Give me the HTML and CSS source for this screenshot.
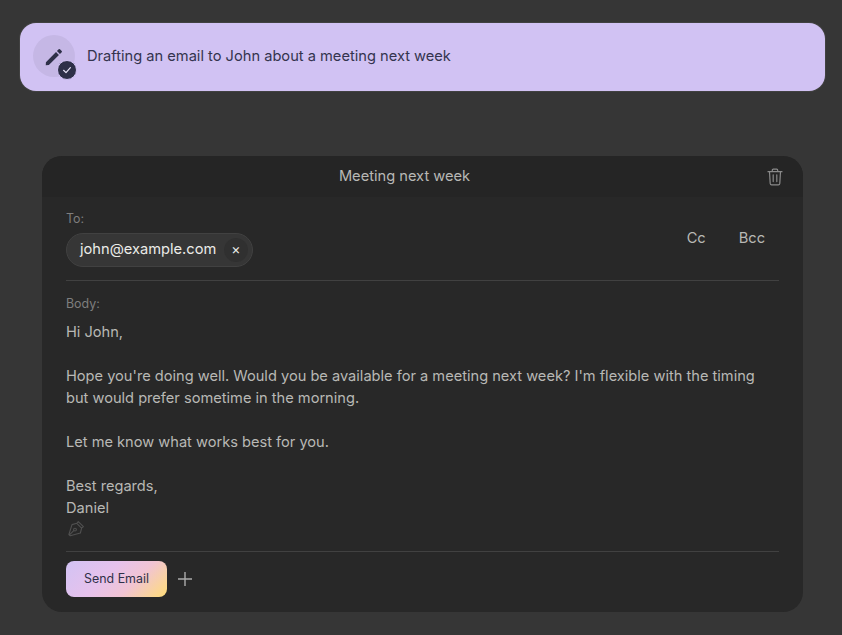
FILE: index.html
```html
<!DOCTYPE html>
<html lang="en">
<head>
<meta charset="utf-8">
<title>Email draft</title>
<link rel="stylesheet" href="styles.css">
</head>
<body>
<div class="banner">
  <div class="status-icon">
    <svg class="pencil" viewBox="0 0 24 24" width="22" height="22"><path d="M3.2 17.6 3 21l3.4-.2L17.4 9.8l-3.2-3.2L3.2 17.6zM20.4 6.8a1 1 0 0 0 0-1.4l-1.9-1.9a1 1 0 0 0-1.4 0l-1.9 1.9 3.3 3.3 1.9-1.9z"/></svg>
    <span class="check"><svg viewBox="0 0 12 12" width="12" height="12"><path d="M2.6 6.3 5 8.6l4.4-5" fill="none" stroke="#e8e4f6" stroke-width="1.2" stroke-linecap="round" stroke-linejoin="round"/></svg></span>
  </div>
  <span class="banner-text">Drafting an email to John about a meeting next week</span>
</div>
<section class="card">
  <header class="card-head">
    <span class="card-title">Meeting next week</span>
    <svg class="trash" viewBox="0 0 16 18" width="16" height="18"><path d="M1 3.7h14M5.3 3.5V2.2c0-.6.4-1 1-1h3.4c.6 0 1 .4 1 1v1.3M2.5 3.8l.7 11.6c.1.8.6 1.4 1.4 1.4h6.8c.8 0 1.3-.6 1.4-1.4l.7-11.6M6.2 6.8v6.8M9.8 6.8v6.8" fill="none" stroke="#8a8a8a" stroke-width="1.2" stroke-linecap="round" stroke-linejoin="round"/></svg>
  </header>
  <div class="card-body">
    <div class="to-row">
      <div class="to-field">
        <div class="label">To:</div>
        <div class="chip"><span>john@example.com</span><span class="chip-x">×</span></div>
      </div>
      <div class="cc-links"><span>Cc</span><span>Bcc</span></div>
    </div>
    <div class="body-field">
      <div class="label">Body:</div>
      <div class="message">
        <p>Hi John,</p>
        <p>Hope you're doing well. Would you be available for a meeting next week? I'm flexible with the timing but would prefer sometime in the morning.</p>
        <p>Let me know what works best for you.</p>
        <p>Best regards,<br>Daniel</p>
      </div>
      <svg class="pen" viewBox="0 0 18 18" width="18" height="18"><path d="M11.3 1.6 16.4 6.7 14.6 8.2 13.4 13 3.2 15.8 1.9 14.5 5 4.6 9.8 3.3zM9.8 3.3 14.6 8.2M2.2 15.2 7 10.4" fill="none" stroke="#505050" stroke-width="1.1" stroke-linejoin="round"/><circle cx="8" cy="9.6" r="1.4" fill="none" stroke="#505050" stroke-width="1.1"/></svg>
    </div>
    <div class="actions">
      <button class="send">Send Email</button>
      <svg class="plus" viewBox="0 0 14 14" width="14" height="14"><path d="M7 0v14M0 7h14" stroke="#ababab" stroke-width="1.4"/></svg>
    </div>
  </div>
</section>
</body>
</html>
```
FILE: styles.css
```css
* { box-sizing: border-box; }
html, body { margin: 0; height: 100%; }
body {
  background: #363636;
  font-family: Inter, "Liberation Sans", sans-serif;
  padding: 23px 17px 23px 20px;
  overflow: hidden;
}
.banner {
  height: 68px;
  background: #d1c2f3;
  border-radius: 16px;
  display: flex;
  align-items: center;
  gap: 12px;
  padding-left: 13px;
  box-shadow: 0 0 0 1px rgba(255,255,255,.06);
}
.status-icon {
  position: relative;
  width: 42px;
  height: 42px;
  margin-top: -2px;
  border-radius: 50%;
  background: #c5b7e5;
  display: flex;
  align-items: center;
  justify-content: center;
}
.pencil { fill: #2e3048; margin: 1px 1px 0 0; }
.check {
  position: absolute;
  right: -2px;
  bottom: -3px;
  width: 20px;
  height: 20px;
  border-radius: 50%;
  background: #2e3048;
  border: 1px solid #d1c2f3;
  display: flex;
  align-items: center;
  justify-content: center;
}
.banner-text { font-size: 14.65px; line-height: 20px; color: #34344e; margin-top: -2px; }
.card {
  margin: 65px 0 0 22px;
  width: 761px;
  height: 456px;
  background: #282828;
  border-radius: 20px;
  overflow: hidden;
}
.card-head {
  height: 41px;
  padding: 0 36px 2px 0;
  background: #252525;
  display: flex;
  align-items: center;
  justify-content: center;
  position: relative;
}
.card-title { font-size: 14.65px; color: #b8b8b5; }
.trash { position: absolute; right: 20px; top: 12px; }
.card-body { padding: 0 24px; }
.to-row {
  height: 84px;
  padding-top: 14px;
  border-bottom: 1px solid #414141;
  display: flex;
  justify-content: space-between;
}
.label { font-size: 12.4px; line-height: 16px; color: #7e7e7e; }
.chip {
  margin-top: 6px;
  width: 187px;
  height: 34px;
  border-radius: 17px;
  background: #363636;
  border: 1px solid #414141;
  display: flex;
  align-items: center;
  justify-content: space-between;
  padding: 0 4px 2px 13px;
  color: #ebebe8;
  font-size: 14.65px;
}
.chip-x {
  width: 24px;
  height: 24px;
  margin-bottom: -1px;
  padding-bottom: 2px;
  border-radius: 50%;
  background: #303030;
  display: flex;
  align-items: center;
  justify-content: center;
  font-size: 14px;
}
.cc-links {
  display: flex;
  gap: 33px;
  padding: 17px 14px 0 0;
  font-size: 14.65px;
  line-height: 20px;
  color: #b8b8b5;
}
.body-field { height: 271px; padding-top: 15px; border-bottom: 1px solid #414141; }
.message { margin-top: 9px; font-size: 14.62px; line-height: 22px; color: #b8b8b5; }
.message p { margin: 0 0 22px; }
.message p:last-child { margin: 0; }
.pen { display: block; margin: 1px 0 0 1px; }
.actions { display: flex; align-items: center; gap: 11px; padding-top: 9px; }
.send {
  width: 101px;
  height: 36px;
  padding: 0 0 2px;
  border: 0;
  border-radius: 8px;
  background: linear-gradient(135deg, #d2c3f4 0%, #e6c2ec 40%, #f1c4d4 65%, #ffdd77 100%);
  color: #2e3048;
  font: 400 12.4px Inter, "Liberation Sans", sans-serif;
}
```
